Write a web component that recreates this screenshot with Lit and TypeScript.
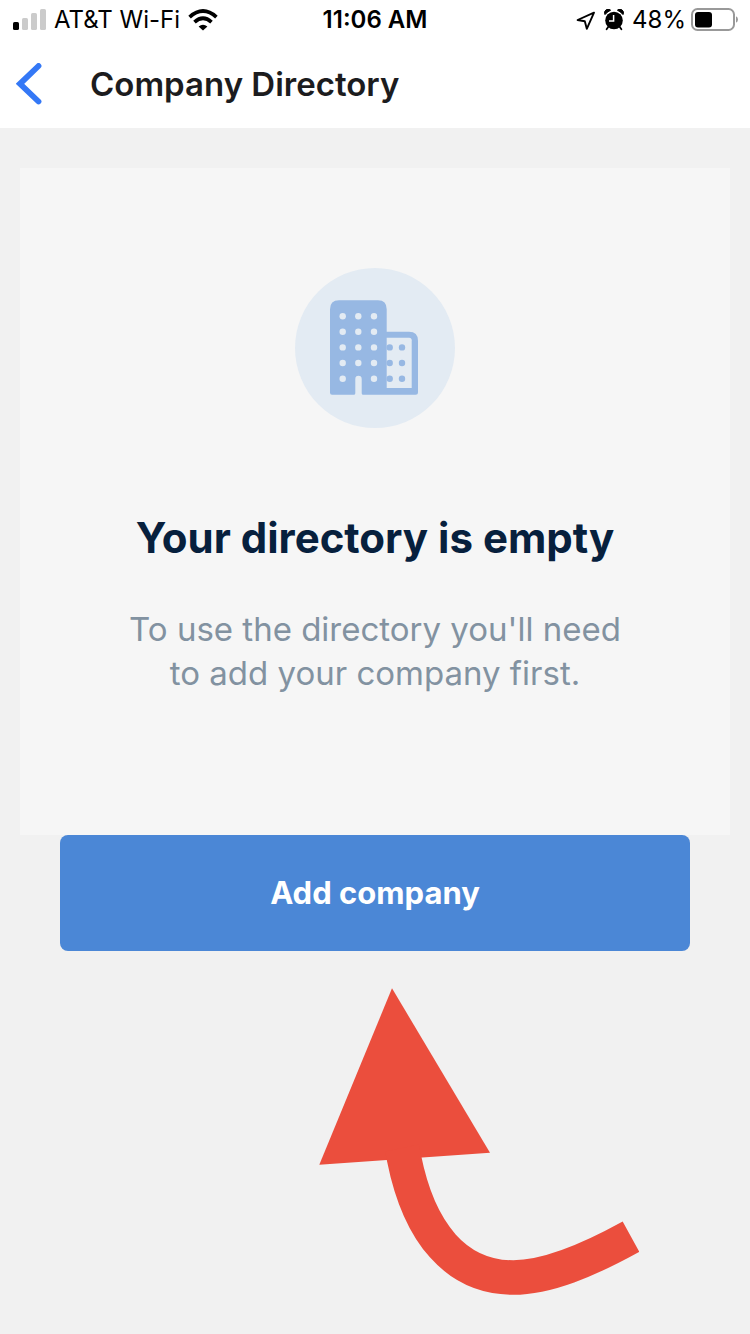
import { LitElement, html, css, svg } from "lit";
import { customElement } from "lit/decorators.js";

@customElement("status-bar")
class StatusBar extends LitElement {
  static styles = css`
    :host {
      display: grid;
      grid-template-columns: 1fr auto 1fr;
      align-items: center;
      height: 40px;
      padding: 0 12px;
      font-size: 24px;
      line-height: 28px;
      color: #000;
    }
    .side {
      display: flex;
      align-items: center;
      gap: 8px;
    }
    .end {
      justify-content: flex-end;
    }
    .level {
      display: flex;
      align-items: center;
      gap: 4px;
    }
    .time {
      font-weight: 600;
    }
    svg {
      display: block;
      flex: none;
    }
  `;
  render() {
    return html`
      <div class="side">
        <svg width="34" height="22" viewBox="0 0 34 22" aria-hidden="true">
          <rect x="1" y="13" width="6" height="8" rx="1.6" />
          <g fill="#cbcbcb">
            <rect x="10" y="9" width="6" height="12" rx="1.6" />
            <rect x="19" y="4" width="6" height="17" rx="1.6" />
            <rect x="28" y="0" width="6" height="21" rx="1.6" />
          </g>
        </svg>
        <span>AT&amp;T Wi-Fi</span>
        <svg width="30" height="22" viewBox="0 0 30 22" aria-hidden="true">
          <path d="M15 21.6 10.6 17.6Q15 13.8 19.4 17.6Z" />
          <path d="M1.6 8.1Q15-3.9 28.4 8.1M6.5 13.1Q15 5.6 23.5 13.1" fill="none" stroke="#000" stroke-width="3.8" />
        </svg>
      </div>
      <span class="time">11:06 AM</span>
      <div class="side end">
        <svg width="20" height="20" viewBox="0 0 20 20" aria-hidden="true">
          <path d="M18 2.6 1.6 10 8.8 11.3 10.8 18.8Z" fill="none" stroke="#000" stroke-width="1.9" stroke-linejoin="round" />
        </svg>
        <svg width="20" height="22" viewBox="0 0 20 22" aria-hidden="true">
          <circle cx="10" cy="11.5" r="8.8" />
          <path d="M1 5.6A3.6 3.6 0 0 1 6.6 1.2Q3.2 2.8 1 5.6ZM19 5.6A3.6 3.6 0 0 0 13.4 1.2Q16.8 2.8 19 5.6Z" stroke="#000" stroke-width="1" stroke-linejoin="round" />
          <path d="M4.2 18 2.6 20.2M15.8 18l1.6 2.2" stroke="#000" stroke-width="1.8" stroke-linecap="round" />
          <path d="M9.6 6V12H5" fill="none" stroke="#fff" stroke-width="1.5" />
        </svg>
        <div class="level">
          <span>48%</span>
          <svg width="48" height="24" viewBox="0 0 48 24" aria-hidden="true">
            <rect x="2" y="1" width="42" height="21" rx="5.5" fill="none" stroke="#999" stroke-width="2" />
            <rect x="5" y="4" width="17" height="15.5" rx="3" />
            <path d="M46 8.2Q48 9.2 48 11.5T46 14.8Z" fill="#999" />
          </svg>
        </div>
      </div>
    `;
  }
}

const grid = (xs: number[], ys: number[]) =>
  ys.map((y) => xs.map((x) => svg`<circle cx=${x} cy=${y} r="3.2" />`));

@customElement("empty-directory")
class EmptyDirectory extends LitElement {
  static styles = css`
    :host {
      display: flex;
      flex-direction: column;
      align-items: center;
      padding: 100px 40px 140px;
      background: #f6f6f6;
      text-align: center;
    }
    svg {
      display: block;
    }
    h2 {
      margin: 80px 0 0;
      font-size: 42px;
      line-height: 60px;
      font-weight: 700;
      color: #07203d;
    }
    p {
      margin: 39px 0 0;
      max-width: 520px;
      font-size: 33px;
      line-height: 44px;
      color: #8292a1;
    }
  `;
  render() {
    return html`
      <svg width="160" height="160" viewBox="0 0 160 160" aria-hidden="true">
        <circle cx="80" cy="80" r="80" fill="#e3ebf3" />
        <g fill="#97b8e3">
          <path
            d="M35 124.7V41.3Q35 32.3 44 32.3H83Q91.7 32.3 91.7 41.3V63.7H114Q123 63.7 123 72.7V124.2Q123 126.7 120.5 126.7H68.2Q66.7 126.7 66.7 125.2V111A3.2 3.2 0 0 0 60.3 111V125.2Q60.3 126.7 58.8 126.7H37Q35 126.7 35 124.7Z"
          />
        </g>
        <path d="M91.7 69.7H114.2Q116.7 69.7 116.7 72.2V120H91.7Z" fill="#e3ebf3" />
        <g fill="#e3ebf3">
          ${grid([47.7, 79], [48.2, 63.8, 79.4, 95, 110.7])}
          ${grid([63.3], [48.2, 63.8, 79.4, 95])}
        </g>
        <g fill="#97b8e3">${grid([94.7, 107], [79.4, 95, 110.7])}</g>
      </svg>
      <h2>Your directory is empty</h2>
      <p>To use the directory you'll need to add your company first.</p>
    `;
  }
}

@customElement("app-root")
class AppRoot extends LitElement {
  static styles = css`
    :host {
      display: block;
      min-height: 100vh;
      background: #f1f1f1;
      font-family: Inter, "Liberation Sans", sans-serif;
    }
    .top {
      background: #fff;
    }
    .nav {
      display: flex;
      align-items: center;
      gap: 48px;
      height: 88px;
      padding: 0 16px;
    }
    .back {
      display: block;
      padding: 0;
      border: 0;
      background: none;
    }
    svg {
      display: block;
    }
    h1 {
      margin: 0;
      font-size: 33px;
      line-height: 40px;
      font-weight: 600;
      color: #1c1c1e;
    }
    main {
      padding: 40px 20px 0;
    }
    .action {
      padding: 0 40px;
    }
    .add {
      display: block;
      width: 100%;
      padding: 38px 20px;
      border: 0;
      border-radius: 8px;
      background: #4b87d6;
      color: #fff;
      font: 700 31px/40px Inter, "Liberation Sans", sans-serif;
    }
    .pointer {
      display: flex;
      justify-content: flex-end;
      padding: 37px 91px 0;
    }
  `;
  render() {
    return html`
      <div class="top">
        <status-bar></status-bar>
        <header class="nav">
          <button class="back" aria-label="Back">
            <svg width="26" height="42" viewBox="0 0 26 42" aria-hidden="true">
              <path d="M22.5 3 4 20.8 22.5 38.5" fill="none" stroke="#3478f6" stroke-width="5.8" stroke-linecap="round" stroke-linejoin="miter" />
            </svg>
          </button>
          <h1>Company Directory</h1>
        </header>
      </div>
      <main>
        <empty-directory></empty-directory>
        <div class="action"><button class="add">Add company</button></div>
        <div class="pointer">
          <svg width="320" height="308" viewBox="0 0 320 308" aria-hidden="true">
            <path d="M73 0.3 171 164.7 0.3 176.7Z" fill="#eb4e3d" />
            <path d="M83 160 85 170C100 245 137 289.5 194.3 289.5C228 289.5 268 273 312 248.7" fill="none" stroke="#eb4e3d" stroke-width="34.5" />
          </svg>
        </div>
      </main>
    `;
  }
}
